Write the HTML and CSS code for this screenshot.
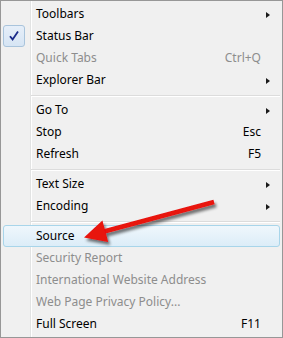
FILE: index.html
```html
<!DOCTYPE html>
<html>
<head>
<meta charset="utf-8">
<link rel="stylesheet" href="styles.css">
</head>
<body>
<div class="menu">
  <div class="item"><span class="icon"></span><span class="label">Toolbars</span><span class="key"></span><span class="sub"><i class="tri"></i></span></div>
  <div class="item"><span class="icon checked"><svg width="12" height="12" viewBox="0 0 12 12"><path d="M2 6.2 L4.6 9.4 L10 1.5" fill="none" stroke="#1a2a8a" stroke-width="1.8"/></svg></span><span class="label">Status Bar</span><span class="key"></span><span class="sub"></span></div>
  <div class="item disabled"><span class="icon"></span><span class="label">Quick Tabs</span><span class="key">Ctrl+Q</span><span class="sub"></span></div>
  <div class="item"><span class="icon"></span><span class="label">Explorer Bar</span><span class="key"></span><span class="sub"><i class="tri"></i></span></div>
  <div class="sep"></div>
  <div class="item"><span class="icon"></span><span class="label">Go To</span><span class="key"></span><span class="sub"><i class="tri"></i></span></div>
  <div class="item"><span class="icon"></span><span class="label">Stop</span><span class="key">Esc</span><span class="sub"></span></div>
  <div class="item"><span class="icon"></span><span class="label">Refresh</span><span class="key">F5</span><span class="sub"></span></div>
  <div class="sep"></div>
  <div class="item"><span class="icon"></span><span class="label">Text Size</span><span class="key"></span><span class="sub"><i class="tri"></i></span></div>
  <div class="item"><span class="icon"></span><span class="label">Encoding</span><span class="key"></span><span class="sub"><i class="tri"></i></span></div>
  <div class="sep"></div>
  <div class="item hover"><span class="icon"></span><span class="label">Source</span><span class="key"></span><span class="sub"></span></div>
  <div class="item disabled"><span class="icon"></span><span class="label">Security Report</span><span class="key"></span><span class="sub"></span></div>
  <div class="item disabled"><span class="icon"></span><span class="label">International Website Address</span><span class="key"></span><span class="sub"></span></div>
  <div class="item disabled"><span class="icon"></span><span class="label">Web Page Privacy Policy...</span><span class="key"></span><span class="sub"></span></div>
  <div class="item"><span class="icon"></span><span class="label">Full Screen</span><span class="key">F11</span><span class="sub"></span></div>

  <svg class="pointer" width="283" height="338" viewBox="0 0 283 338">
    <defs>
      <filter id="sh" x="-20%" y="-50%" width="140%" height="200%">
        <feGaussianBlur in="SourceAlpha" stdDeviation="1.6"/>
        <feOffset dx="2" dy="3" result="b"/>
        <feComponentTransfer><feFuncA type="linear" slope="0.55"/></feComponentTransfer>
        <feMerge><feMergeNode/><feMergeNode in="SourceGraphic"/></feMerge>
      </filter>
    </defs>
    <g filter="url(#sh)">
      <line x1="214" y1="202" x2="104" y2="231.5" stroke="#e8120f" stroke-width="4.5"/>
      <polygon points="84,237.5 102.4,220.5 108.2,242" fill="#e8120f"/>
    </g>
  </svg>
</div>
</body>
</html>
```

FILE: styles.css
```css
html, body {
  margin: 0;
  padding: 0;
  background: #ffffff;
}

.menu {
  position: relative;
  box-sizing: border-box;
  width: 283px;
  height: 338px;
  border: 1px solid #979797;
  padding: 2px;
  background:
    linear-gradient(to right, transparent 29px, #e2e3e3 29px, #e2e3e3 30px, #ffffff 30px, #ffffff 31px, transparent 31px),
    #f0f0f0;
  font-family: "Noto Sans", "Open Sans", sans-serif;
  font-size: 12px;
  color: #000;
}

.item {
  box-sizing: border-box;
  height: 22px;
  display: grid;
  grid-template-columns: 32px 1fr auto 18px;
  align-items: center;
  border: 1px solid transparent;
  border-radius: 3px;
}

.item .icon {
  display: flex;
  align-items: center;
  justify-content: center;
  width: 22px;
  height: 22px;
  margin: -1px 0 0 -1px;
  box-sizing: border-box;
}

.item .icon.checked {
  border: 1px solid #a9c4dc;
  border-radius: 3px;
  background: linear-gradient(#e6eff9, #d6e5f4);
}

.label {
  white-space: nowrap;
  line-height: 22px;
  margin-top: -1px;
}

.key {
  white-space: nowrap;
  line-height: 22px;
  margin-top: -1px;
  text-align: right;
}

.sub {
  display: flex;
  align-items: center;
  padding-left: 5px;
}

.tri {
  display: block;
  width: 0;
  height: 0;
  border-top: 3.5px solid transparent;
  border-bottom: 3.5px solid transparent;
  border-left: 4px solid #1a1a1a;
}

.disabled {
  color: #8d8d8d;
}

.hover {
  border-color: #a8d5ea;
  background: linear-gradient(#eff7fc, #dcedf8);
}

.sep {
  height: 8px;
  margin-left: 28px;
  box-sizing: border-box;
  padding-top: 4px;
}

.sep::before {
  content: "";
  display: block;
  height: 1px;
  background: #dcdcdc;
  border-bottom: 1px solid #ffffff;
}

.pointer {
  position: absolute;
  left: -1px;
  top: -1px;
  pointer-events: none;
}
```
